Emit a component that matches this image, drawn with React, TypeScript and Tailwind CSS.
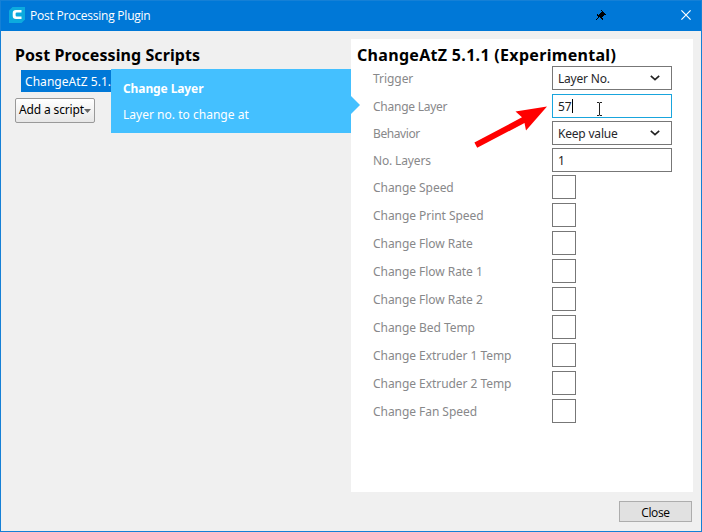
import type { ReactNode } from "react";

const checks = [
  "Change Speed",
  "Change Print Speed",
  "Change Flow Rate",
  "Change Flow Rate 1",
  "Change Flow Rate 2",
  "Change Bed Temp",
  "Change Extruder 1 Temp",
  "Change Extruder 2 Temp",
  "Change Fan Speed",
];

function Row({ label, tracking = "tracking-[-0.05px]", children }: { label: string; tracking?: string; children: ReactNode }) {
  return (
    <div className="flex h-6 shrink-0 items-center">
      <span className={`w-[179px] whitespace-nowrap pt-[2px] text-[#88888a] ${tracking}`}>{label}</span>
      {children}
    </div>
  );
}

function Select({ value }: { value: string }) {
  return (
    <div className="flex h-6 w-[120px] items-center justify-between border border-[#777] bg-white pl-[5px] pr-[11px] tracking-[-0.2px] text-[#27272b]">
      <span className="pt-[2px]">{value}</span>
      <svg width="10" height="6" viewBox="0 0 10 6" fill="none">
        <path d="M.8.8 5 4.6 9.2.8" stroke="#222" strokeWidth="1.6" />
      </svg>
    </div>
  );
}

export default function App() {
  return (
    <div className="flex h-[532px] w-[702px] flex-col overflow-hidden border border-[#1580d6] bg-[#f0f0f0] font-['Noto_Sans',sans-serif] text-[12px] leading-[16px]">
      <header className="flex h-[30px] shrink-0 items-center bg-[#0078d7] pb-[2px] pl-2 text-white">
        <svg width="16" height="16" viewBox="0 0 16 16">
          <path d="M3.5 0H16v12.5L12.5 16H0V3.5Z" fill="#0caade" />
          <path d="M12.5 3H7Q3.7 3 3.7 6.3v2.4Q3.7 12 7 12h5.500V9.400H7.800Q6.600 9.400 6.600 8.200V6.800Q6.600 5.600 7.800 5.600h4.700Z" fill="#fff" />
        </svg>
        <h1 className="ml-[5px] pt-[2px] font-['Open_Sans',sans-serif] text-[12px] tracking-[-0.22px]">Post Processing Plugin</h1>
        <div className="ml-auto flex items-center">
          <svg width="10" height="10" viewBox="0 0 10 10" fill="#000" shapeRendering="crispEdges">
            <path d="M5 0h1v1h1v1h1v1h1v1h1v1H8v1H7v1H6v1h1v2H6V9H5V8H4V7H3v1H2v1H1v1H0V9h1V8h1V6H1V4h1v1h1V4h1V3h1V2h1V1H5Z" />
          </svg>
          <svg className="ml-[75px] mr-[10px]" width="10" height="10" viewBox="0 0 10 10">
            <path d="m.4.4 9.2 9.2m0-9.2L.4 9.6" stroke="white" strokeWidth="1.2" />
          </svg>
        </div>
      </header>

      <main className="flex h-[461px] shrink-0 pt-2">
        <section className="w-[350px] pl-[14px] pt-[5px]">
          <h2 className="h-[22px] whitespace-nowrap text-[16px] font-bold leading-[22px] tracking-[0.08px] text-black">Post Processing Scripts</h2>
          <div className="relative ml-[6px] mt-[4px] h-[22px] w-[329px] bg-[#0078d7] pl-[4px] text-white">
            <span className="block whitespace-nowrap leading-[23px] tracking-[0.05px]">ChangeAtZ 5.1.</span>
            <div className="absolute -top-px left-[90px] h-16 w-[240px] bg-[#44c0ff] pl-3 text-white">
              <h3 className="pt-[11px] font-bold leading-[17px] tracking-[-0.1px]">Change Layer</h3>
              <p className="mt-[9px] leading-[17px] tracking-[0.02px]">Layer no. to change at</p>
              <svg className="absolute left-[240px] top-[27px]" width="9" height="18" viewBox="0 0 9 18">
                <path d="m0 0 9 9-9 9Z" fill="#44c0ff" />
              </svg>
            </div>
          </div>
          <button className="mt-[6px] flex h-[25px] w-[80px] items-center rounded-[2px] border border-[#999] bg-linear-to-b from-white to-[#e7e7e7] pb-px pl-[3px] text-black">
            <span className="w-[65px] whitespace-nowrap tracking-[-0.15px]">Add a script</span>
            <svg className="mt-[2px]" width="7" height="4" viewBox="0 0 7 4">
              <path d="M0 0h7L3.5 4Z" fill="#666" />
            </svg>
          </button>
        </section>

        <section className="flex h-[453px] w-[342px] flex-col bg-white pl-[6px] pt-[5px]">
          <h2 className="h-[22px] shrink-0 whitespace-nowrap text-[16px] font-bold leading-[22px] tracking-[0.31px] text-black">ChangeAtZ 5.1.1 (Experimental)</h2>
          <div className="flex flex-col pl-[16px]">
            <Row label="Trigger"><Select value="Layer No." /></Row>
            <div className="mt-1 flex flex-col gap-[3px]">
              <Row label="Change Layer" tracking="tracking-[-0.25px]">
                <div className="relative flex h-6 w-[120px] items-center border border-[#19a5dd] bg-white pl-[5px] text-[#222]">
                  <span className="pt-[2px]">57</span>
                  <span className="h-[14px] w-px bg-black" />
                  <svg className="absolute left-[43px] top-[7px]" width="7" height="14" viewBox="0 0 7 14">
                    <path d="M1 .5h2l.5.5.5-.5h2M3.5 1v12M1 13.5h2l.5-.5.5.5h2" fill="none" stroke="#222" />
                  </svg>
                  <svg className="absolute -left-[80px] -top-[1px]" width="76" height="56" viewBox="0 0 76 56">
                    <path d="M74 12.500 53 36.500 51.500 29 4.200 53.800 1.400 48.400 49 23.300 42.500 17.500Z" fill="#f00" />
                  </svg>
                </div>
              </Row>
              <Row label="Behavior" tracking="tracking-[-0.4px]"><Select value="Keep value" /></Row>
              <Row label="No. Layers" tracking="tracking-[-0.15px]">
                <div className="flex h-6 w-[120px] items-center border border-[#777] bg-white pl-[5px] pt-[2px] text-[#222]">1</div>
              </Row>
            </div>
            <div className="mt-[3px] flex flex-col gap-1">
              {checks.map((label) => (
                <Row key={label} label={label}>
                  <span className="size-6 border border-[#777] bg-white" />
                </Row>
              ))}
            </div>
          </div>
        </section>
      </main>

      <footer className="flex justify-end pr-[9px] pt-[9px]">
        <button className="h-[21px] w-[73px] border border-[#adadad] bg-[#e1e1e1] pt-px font-['Open_Sans',sans-serif] leading-[19px] tracking-[-0.35px] text-black">Close</button>
      </footer>
    </div>
  );
}
